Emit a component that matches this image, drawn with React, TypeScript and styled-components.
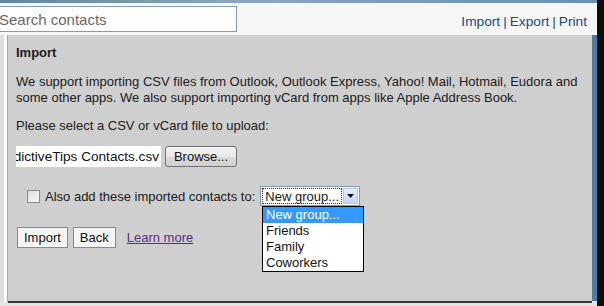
import styled, { createGlobalStyle } from 'styled-components';

const GlobalStyle = createGlobalStyle`
  html, body {
    margin: 0;
    padding: 0;
    background: #e4e4e4;
    font-family: Arial, "Liberation Sans", sans-serif;
  }
`;

const Window = styled.div`
  width: 604px;
  height: 306px;
  display: flex;
  flex-direction: column;
  overflow: hidden;
  box-sizing: border-box;
  border-right: 7px solid #0c0c0c;
  background: #e4e4e4;
`;

const TopBar = styled.div`
  height: 3px;
  flex: none;
  background: linear-gradient(90deg, #5f86a8, #8aa6c2 40%, #6a8fb0);
`;

const Header = styled.div`
  height: 32px;
  flex: none;
  display: flex;
  align-items: center;
  justify-content: space-between;
  background: #f6f6f4;
  padding-right: 10px;
`;

const Search = styled.div`
  width: 250px;
  height: 26px;
  margin-left: -13px;
  box-sizing: border-box;
  border: 1px solid #7f9db9;
  background: #fdfdfb;
  color: #6a6a6a;
  font-size: 15px;
  display: flex;
  align-items: center;
  padding-left: 11px;
`;

const Links = styled.div`
  font-size: 13.7px;
  color: #1d4890;
  padding-top: 4px;
`;

const Sep = styled.span`
  margin: 0 3px;
`;

const Body = styled.div`
  flex: 1;
  display: flex;
`;

const LeftStrip = styled.div`
  width: 8px;
  flex: none;
  background: linear-gradient(90deg, #dedede 0 4px, #ffffff 4px 7px, #a8a8a8 7px);
  margin-bottom: 4px;
`;

const PanelWrap = styled.div`
  flex: 1;
  display: flex;
  flex-direction: column;
`;

const Panel = styled.div`
  flex: 1;
  background: #cfcfcf;
  padding: 9px 0 0 8px;
  color: #202020;
  font-size: 13px;
  position: relative;
  border-right: 5px solid #4a7ea6;
`;

const BottomEdge = styled.div`
  height: 2px;
  background: #3a3a3a;
  margin-bottom: 3px;
  margin-right: 5px;
`;

const Title = styled.div`
  font-weight: bold;
  font-size: 13px;
  margin: 1px 0 14px;
`;

const Para = styled.p`
  margin: 0 0 12px;
  line-height: 16px;
`;

const FileRow = styled.div`
  display: flex;
  gap: 4px;
  margin-top: 12px;
  height: 21px;
`;

const FileField = styled.div`
  width: 145px;
  background: #ffffff;
  overflow: hidden;
  white-space: nowrap;
  display: flex;
  align-items: center;
  justify-content: flex-end;
  font-size: 13.6px;
  color: #111;
  padding-right: 2px;
  box-sizing: border-box;
`;

const BrowseButton = styled.div`
  width: 72px;
  box-sizing: border-box;
  border: 1px solid #707070;
  border-radius: 3px;
  background: linear-gradient(#f4f4f4, #e8e8e8 50%, #dcdcdc 51%, #cfcfcf);
  display: flex;
  align-items: center;
  justify-content: center;
  font-size: 13px;
  color: #111;
`;

const GroupRow = styled.div`
  display: flex;
  align-items: center;
  margin-top: 19px;
  margin-left: 11px;
  height: 20px;
  position: relative;
`;

const Check = styled.div`
  width: 13px;
  height: 13px;
  box-sizing: border-box;
  border: 1px solid #8a8a8a;
  background: linear-gradient(135deg, #dcdcdc, #fafafa);
  margin-right: 5px;
`;

const Label = styled.span`
  font-size: 13px;
  margin-right: 5px;
`;

const Select = styled.div`
  width: 100px;
  height: 20px;
  box-sizing: border-box;
  border: 1px solid #7f9db9;
  background: #fff;
  display: flex;
  padding: 1px;
`;

const SelectValue = styled.div`
  flex: 1;
  outline: 1px dotted #333;
  outline-offset: -1px;
  display: flex;
  align-items: center;
  padding-left: 3px;
  font-size: 13px;
  white-space: nowrap;
  overflow: hidden;
`;

const Arrow = styled.div`
  width: 15px;
  margin-left: 1px;
  background: linear-gradient(#e6eefc, #c2d3f4);
  border: 1px solid #b6c8ea;
  box-sizing: border-box;
  display: flex;
  align-items: center;
  justify-content: center;
`;

const ListBox = styled.div`
  position: absolute;
  left: 235px;
  top: 20px;
  width: 102px;
  box-sizing: border-box;
  border: 1px solid #000;
  background: #fff;
  z-index: 2;
`;

const Option = styled.div<{ $active?: boolean }>`
  height: 16px;
  line-height: 16px;
  padding-left: 3px;
  font-size: 13px;
  color: ${(p) => (p.$active ? '#fff' : '#111')};
  background: ${(p) => (p.$active ? '#3399ff' : 'transparent')};
`;

const Actions = styled.div`
  display: flex;
  align-items: center;
  gap: 5px;
  margin-top: 21px;
  margin-left: 1px;
`;

const Button = styled.div`
  height: 21px;
  box-sizing: border-box;
  border: 1px solid #8a8a8a;
  background: #f5f5f5;
  padding: 0 6px;
  display: flex;
  align-items: center;
  font-size: 13px;
  color: #111;
`;

const LearnMore = styled.a`
  margin-left: 6px;
  color: #5b2e8c;
  text-decoration: underline;
  font-size: 13px;
  cursor: pointer;
`;

export default function App() {
  return (
    <>
      <GlobalStyle />
      <Window>
        <TopBar />
        <Header>
          <Search>Search contacts</Search>
          <Links>
            Import<Sep>|</Sep>Export<Sep>|</Sep>Print
          </Links>
        </Header>
        <Body>
          <LeftStrip />
          <PanelWrap>
            <Panel>
              <Title>Import</Title>
              <Para>
                We support importing CSV files from Outlook, Outlook Express, Yahoo! Mail, Hotmail, Eudora and
                some other apps. We also support importing vCard from apps like Apple Address Book.
              </Para>
              <Para>Please select a CSV or vCard file to upload:</Para>
              <FileRow>
                <FileField>AddictiveTips Contacts.csv</FileField>
                <BrowseButton>Browse...</BrowseButton>
              </FileRow>
              <GroupRow>
                <Check />
                <Label>Also add these imported contacts to:</Label>
                <Select>
                  <SelectValue>New group...</SelectValue>
                  <Arrow>
                    <svg width="7" height="4" viewBox="0 0 7 4">
                      <path d="M0 0h7L3.5 4z" fill="#111" />
                    </svg>
                  </Arrow>
                </Select>
                <ListBox>
                  <Option $active>New group...</Option>
                  <Option>Friends</Option>
                  <Option>Family</Option>
                  <Option>Coworkers</Option>
                </ListBox>
              </GroupRow>
              <Actions>
                <Button>Import</Button>
                <Button>Back</Button>
                <LearnMore>Learn more</LearnMore>
              </Actions>
            </Panel>
            <BottomEdge />
          </PanelWrap>
        </Body>
      </Window>
    </>
  );
}
